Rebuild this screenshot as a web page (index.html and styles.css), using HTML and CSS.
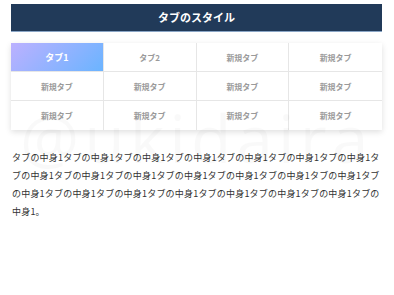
FILE: index.html
```html
<!DOCTYPE html>
<html lang="ja">

<head>
    <meta charset="UTF-8">
    <meta name="viewport" content="width=device-width, initial-scale=1.0">
    <title>タブのスタイル</title>
    <link rel="stylesheet" href="styles.css">
</head>

<body>
    <div class="page">
        <div class="heading">タブのスタイル</div>

        <div class="tabs">
            <div class="tab active">タブ1</div>
            <div class="tab">タブ2</div>
            <div class="tab">新規タブ</div>
            <div class="tab">新規タブ</div>
            <div class="tab">新規タブ</div>
            <div class="tab">新規タブ</div>
            <div class="tab">新規タブ</div>
            <div class="tab">新規タブ</div>
            <div class="tab">新規タブ</div>
            <div class="tab">新規タブ</div>
            <div class="tab">新規タブ</div>
            <div class="tab">新規タブ</div>
        </div>

        <p class="content">タブの中身1タブの中身1タブの中身1タブの中身1タブの中身1タブの中身1タブの中身1タブの中身1タブの中身1タブの中身1タブの中身1タブの中身1タブの中身1タブの中身1タブの中身1タブの中身1タブの中身1タブの中身1タブの中身1タブの中身1タブの中身1タブの中身1。</p>

        <!-- watermark -->
        <div class="watermark">@ukidaira</div>
    </div>
</body>

</html>
```

FILE: styles.css
```css
* {
    margin: 0;
    padding: 0;
    box-sizing: border-box;
}

body {
    width: 100%;
    height: 100vh;
    background-color: #ffffff;
    font-family: "Noto Sans CJK JP", "Noto Sans", sans-serif;
}

.page {
    position: relative;
    padding: 4px 12px 0 11px;
}

/* Title bar */
.heading {
    height: 28px;
    line-height: 27px;
    background-color: #213a59;
    border-bottom: 1px solid #8aa6c6;
    color: #ffffff;
    font-size: 11px;
    font-weight: 700;
    text-align: center;
}

/* Tab grid */
.tabs {
    display: grid;
    grid-template-columns: repeat(4, 1fr);
    margin-top: 11px;
    background-color: #ffffff;
    box-shadow: 0 2px 6px rgba(0, 0, 0, 0.13);
}

.tab {
    height: 29px;
    display: flex;
    align-items: center;
    justify-content: center;
    border-right: 1px solid #e6e6e6;
    border-bottom: 1px solid #e6e6e6;
    color: #9a9a9a;
    font-size: 8px;
    font-weight: 700;
}

.tab:nth-child(4n) {
    border-right: none;
}

.tab:nth-child(n+9) {
    border-bottom: none;
}

.tab.active {
    background: linear-gradient(135deg, #bcb1ff 0%, #6bb4ff 100%);
    color: #ffffff;
    font-size: 9px;
}

/* Tab body */
.content {
    margin-top: 19px;
    padding-left: 1px;
    font-size: 9px;
    letter-spacing: 0.2px;
    line-height: 18px;
    color: #333333;
    word-break: break-all;
}

.watermark {
    position: absolute;
    left: 20px;
    top: 104px;
    font-family: "Open Sans", sans-serif;
    font-size: 66px;
    line-height: 66px;
    letter-spacing: 5px;
    white-space: nowrap;
    color: rgba(0, 0, 0, 0.022);
    pointer-events: none;
}
```
